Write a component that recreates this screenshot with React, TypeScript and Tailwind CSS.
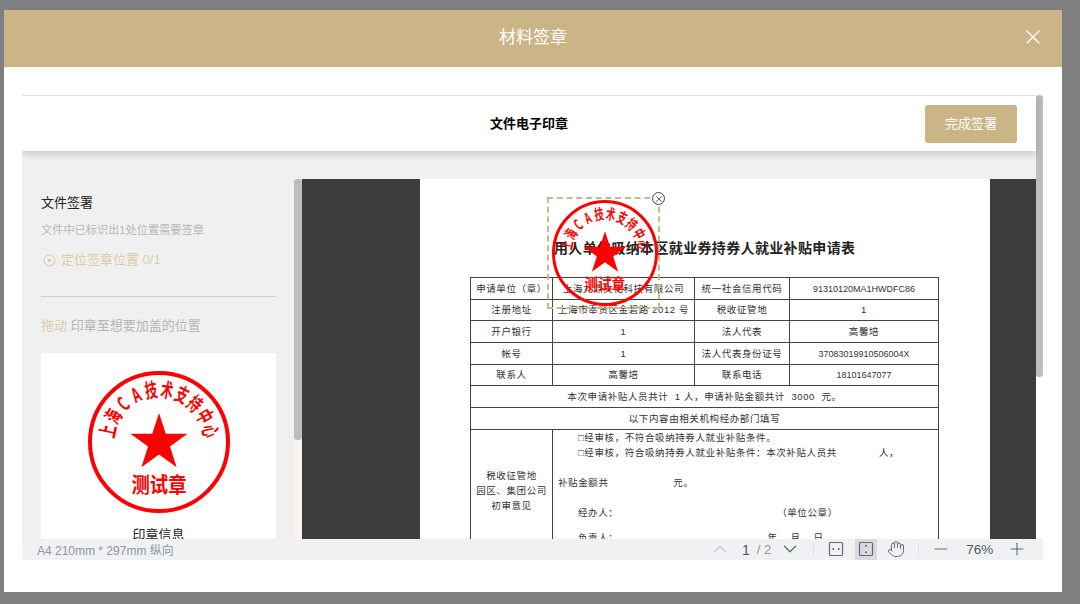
import { ChevronDown, ChevronUp, Hand, Minus, Plus, X } from "lucide-react";

const sans = "font-['Liberation_Sans','Noto_Sans_CJK_SC',sans-serif]";
const sealFont = "'Noto Sans CJK SC', sans-serif";
const sealChars = ["上", "海", "C", "A", "技", "术", "支", "持", "中", "心"];

function Stamp({ className }: { className: string }) {
  const points = [0, 1, 2, 3, 4, 5, 6, 7, 8, 9]
    .map((i) => {
      const r = i % 2 === 0 ? 30 : 11.5;
      const a = (Math.PI / 5) * i - Math.PI / 2;
      return `${71 + r * Math.cos(a)},${72 + r * Math.sin(a)}`;
    })
    .join(" ");
  return (
    <svg viewBox="0 0 142 142" className={className}>
      <circle cx="71" cy="71" r="69" fill="none" stroke="#ff0000" strokeWidth="4" />
      {sealChars.map((ch, i) => (
        <text
          key={i}
          transform={`rotate(${-78 + i * 17.33} 71 71) translate(71 26) scale(0.62 1)`}
          textAnchor="middle"
          fill="#ff0000"
          fontSize="20"
          fontWeight="700"
          fontFamily={sealFont}
        >
          {ch}
        </text>
      ))}
      <polygon points={points} fill="#ff0000" />
      <text
        x="71"
        y="121"
        textAnchor="middle"
        fill="#ff0000"
        fontSize="21"
        fontWeight="700"
        fontFamily={sealFont}
        textLength="55"
        lengthAdjust="spacingAndGlyphs"
      >
        测试章
      </text>
    </svg>
  );
}

function Num({ children }: { children: string }) {
  return <span className="text-[9px] tracking-normal">{children}</span>;
}

function InfoRow({ a, b, c, d }: { a: string; b: React.ReactNode; c: string; d: React.ReactNode }) {
  const cell = "border border-[#444] text-center p-0 pt-px h-[21.7px]";
  return (
    <tr>
      <td className={cell}>{a}</td>
      <td className={cell}>{b}</td>
      <td className={cell}>{c}</td>
      <td className={cell}>{d}</td>
    </tr>
  );
}

function FitWidthIcon() {
  return (
    <svg viewBox="0 0 16 16" className="w-[16px] h-[16px]" fill="none" stroke="#5f6b76" strokeWidth="1.2">
      <rect x="1.5" y="1.5" width="13" height="13" rx="1" />
      <path d="M4.5 8h1.5M10 8h1.5" strokeWidth="2" />
    </svg>
  );
}

function FitPageIcon() {
  return (
    <svg viewBox="0 0 16 16" className="w-[16px] h-[16px]" fill="none" stroke="#5f6b76" strokeWidth="1.2">
      <rect x="1.5" y="1.5" width="13" height="13" rx="1" />
      <path d="M8 4v1.5M8 10.5V12" strokeWidth="2" />
    </svg>
  );
}

export default function App() {
  return (
    <div className={`w-[1080px] h-[604px] overflow-hidden bg-[#808080] pt-[10px] pl-[4px] ${sans}`}>
      <div className="w-[1058px] h-[582px] bg-white flex flex-col">
        <div className="relative h-[57px] bg-[#cbb485] flex items-center justify-center text-white text-[17px]">
          <span className="-mt-[1px]">材料签章</span>
          <X className="absolute right-[17px] top-[15px] w-[24px] h-[24px]" strokeWidth={1.4} />
        </div>

        <div className="pt-[28px] pl-[18px]">
          <div className="relative w-[1021px] h-[444px] overflow-hidden">
            <div className="absolute right-0 top-0 w-[7px] h-[282px] rounded-[3px] bg-[#bdbdbd]" />
            <div className="w-[1014px] h-[444px] flex flex-col border-t border-[#e6e6e6]">
              <div className="relative z-10 h-[55px] shrink-0 bg-white flex items-center justify-center shadow-[0_3px_8px_rgba(0,0,0,0.18)]">
                <span className="text-[13px] font-bold text-black">文件电子印章</span>
                <div className="absolute right-[19px] top-[9px] w-[92px] h-[38px] rounded-[3px] bg-[#cbb485] flex items-center justify-center text-[13px] text-white">
                  完成签署
                </div>
              </div>

              <div className="flex-1 min-h-0 bg-[#f0f0f0] pt-[28px] flex">
                <div className="w-[272px] h-[360px] shrink-0 overflow-hidden pl-[19px] pr-[18px] pt-[16px]">
                  <div className="text-[13px] leading-[16px] text-[#222]">文件签署</div>
                  <div className="mt-[12px] text-[11.2px] leading-[14px] text-[#b8b8b8]">文件中已标识出1处位置需要签章</div>
                  <div className="mt-[15px] flex items-center gap-[5px] text-[13px] leading-[16px] text-[#dccba8] pl-[2px]">
                    <svg viewBox="0 0 14 14" className="w-[13px] h-[13px]" fill="none" stroke="#dccba8">
                      <circle cx="7" cy="7" r="5.8" strokeWidth="1.1" />
                      <circle cx="7" cy="7" r="2" fill="#dccba8" stroke="none" />
                    </svg>
                    定位签章位置 0/1
                  </div>
                  <div className="mt-[28px] h-px bg-[#cfcfcf]" />
                  <div className="mt-[21px] text-[13px] leading-[16px] text-[#b4b4b4]">
                    <span className="text-[#dccba8]">拖动</span> 印章至想要加盖的位置
                  </div>
                  <div className="mt-[19px] h-[200px] bg-white pt-[18px] flex flex-col items-center">
                    <Stamp className="w-[142px] h-[142px]" />
                    <div className="mt-[13px] text-[13px] leading-[18px] text-[#222]">印章信息</div>
                  </div>
                </div>

                <div className="w-[8px] h-[360px] shrink-0 bg-[#fdf4f2]">
                  <div className="h-[261px] rounded-[3px] bg-[#bdbdbd]" />
                </div>

                <div className="flex h-[360px] overflow-hidden">
                  <div className="w-[118px] bg-[#3c3c3c]" />
                  <div className="relative w-[570px] bg-white pl-[50px] text-[#333] text-[9.5px] tracking-[0.6px]">
                    <div className="absolute left-[127px] top-[18px] w-[113px] h-[112px] border-[2px] border-dashed border-[#cdb88e]" />
                    <div className="absolute left-[232px] top-[13px] w-[13px] h-[13px] rounded-full border border-[#444] bg-white flex items-center justify-center">
                      <X className="w-[10px] h-[10px] text-[#444]" strokeWidth={2} />
                    </div>

                    <div className="pt-[59px] text-[14px] leading-[20px] font-bold text-[#222] tracking-[0.35px] pl-[84px] whitespace-nowrap">
                      用人单位吸纳本区就业券持券人就业补贴申请表
                    </div>
                    <table className="mt-[19px] w-[468px] table-fixed border-collapse">
                      <colgroup>
                        <col className="w-[82px]" />
                        <col className="w-[142px]" />
                        <col className="w-[95px]" />
                        <col className="w-[149px]" />
                      </colgroup>
                      <tbody>
                        <InfoRow a="申请单位（章）" b="上海九鼎文化科技有限公司" c="统一社会信用代码" d={<Num>91310120MA1HWDFC86</Num>} />
                        <InfoRow a="注册地址" b="上海市奉贤区金碧路 2012 号" c="税收征管地" d="1" />
                        <InfoRow a="开户银行" b="1" c="法人代表" d="高馨培" />
                        <InfoRow a="帐号" b="1" c="法人代表身份证号" d={<Num>37083019910506004X</Num>} />
                        <InfoRow a="联系人" b="高馨培" c="联系电话" d={<Num>18101647077</Num>} />
                        <tr>
                          <td colSpan={4} className="border border-[#444] text-center p-0 pt-px h-[21.7px] whitespace-pre">
                            本次申请补贴人员共计  1 人，申请补贴金额共计  3000  元。
                          </td>
                        </tr>
                        <tr>
                          <td colSpan={4} className="border border-[#444] text-center p-0 pt-px h-[21.7px]">
                            以下内容由相关机构经办部门填写
                          </td>
                        </tr>
                        <tr>
                          <td className="border border-[#444] text-center p-0 h-[140px] leading-[15px] align-top pt-[38px]">
                            税收征管地
                            <br />
                            园区、集团公司
                            <br />
                            初审意见
                          </td>
                          <td colSpan={3} className="border border-[#444] p-0 pl-[5px] h-[140px] align-top leading-[15px] whitespace-pre">
                            <div className="pl-[20px]">□经审核，不符合吸纳持券人就业补贴条件。</div>
                            <div className="pl-[20px]">□经审核，符合吸纳持券人就业补贴条件：本次补贴人员共             人，</div>
                            <div className="mt-[15px]">补贴金额共                    元。</div>
                            <div className="mt-[15px] pl-[20px]">经办人：                                                 （单位公章）</div>
                            <div className="mt-[10px] pl-[20px]">负责人：                                              年    月    日</div>
                          </td>
                        </tr>
                      </tbody>
                    </table>
                    <div className="absolute left-[132px] top-[21px] w-[106px] h-[106px]">
                      <Stamp className="w-[106px] h-[106px]" />
                    </div>
                  </div>
                  <div className="w-[46px] bg-[#3c3c3c]" />
                </div>
              </div>
            </div>
          </div>

          <div className="w-[1021px] h-[22px] bg-[#eff1f3] flex items-center text-[#8e969e] -mt-px">
            <span className="pl-[15px] pt-[3px] text-[12px] w-[687px] shrink-0">A4 210mm * 297mm 纵向</span>
            <ChevronUp className="w-[22px] h-[22px] text-[#c8cbd0]" strokeWidth={1.3} />
            <span className="ml-[11px] mt-[2px] text-[14px] text-[#4d5761]">1</span>
            <span className="ml-[7px] mt-[2px] text-[13px]">/ 2</span>
            <ChevronDown className="ml-[8px] w-[22px] h-[22px] text-[#5f6b76]" strokeWidth={1.3} />
            <div className="ml-[12px] w-px h-[12px] bg-[#dcdfe3]" />
            <div className="ml-[14px]">
              <FitWidthIcon />
            </div>
            <div className="ml-[11px] w-[22px] h-[22px] bg-[#d9dbe0] flex items-center justify-center">
              <FitPageIcon />
            </div>
            <Hand className="ml-[10px] w-[18px] h-[18px] text-[#5f6b76]" strokeWidth={1.3} />
            <div className="ml-[13px] w-px h-[12px] bg-[#dcdfe3]" />
            <Minus className="ml-[12px] w-[20px] h-[20px] text-[#5f6b76]" strokeWidth={1.3} />
            <span className="ml-[15px] mt-[2px] text-[13.5px] text-[#4d5761]">76%</span>
            <Plus className="ml-[14px] w-[20px] h-[20px] text-[#5f6b76]" strokeWidth={1.3} />
          </div>
        </div>
      </div>
    </div>
  );
}
